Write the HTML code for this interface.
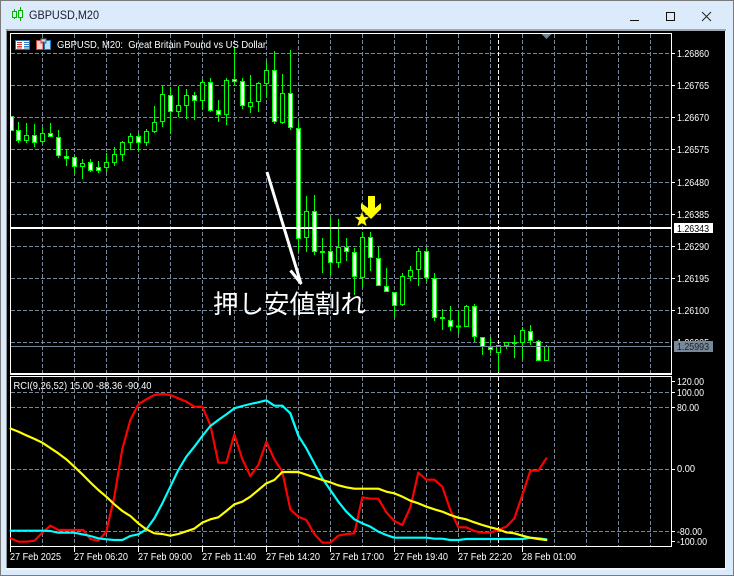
<!DOCTYPE html>
<html><head><meta charset="utf-8"><title>GBPUSD,M20</title>
<style>
html,body{margin:0;padding:0;width:734px;height:576px;overflow:hidden;background:#dcebfb}
svg{position:absolute;left:0;top:0;display:block}
text{font-family:"Liberation Sans","Noto Sans CJK JP",sans-serif;font-size:10.5px;fill:#fff}
.c{shape-rendering:crispEdges}
.w{fill:#fff;stroke:#0f0;stroke-width:1}
.h{fill:#000;stroke:#0f0;stroke-width:1}
.l{fill:none;stroke-width:6.5;stroke-linejoin:round;stroke-linecap:round}
</style></head><body>
<svg width="734" height="576" viewBox="0 0 734 576" xmlns="http://www.w3.org/2000/svg">
<defs><clipPath id="m"><rect x="11" y="34" width="660" height="340"/></clipPath></defs>
<rect width="734" height="576" fill="#dcebfb"/>
<path class="c" d="M.5 576V.5H733.5V576M0 575.5H734" fill="none" stroke="#7a7a7a"/>
<rect class="c" x="6" y="29" width="720" height="2" fill="#a3a8ae"/>
<rect class="c" x="6" y="29" width="2" height="540" fill="#8f959b"/>
<rect class="c" x="7" y="31" width="718" height="537" fill="#000"/>
<rect class="c" x="6" y="568" width="720" height="2" fill="#f2f5f8"/>
<rect class="c" x="725" y="31" width="1" height="538" fill="#f2f5f8"/>

<!-- title bar -->
<g class="c" fill="none" stroke="#00b400"><path d="M14.5 9V19M20.5 7V21"/><rect x="12.5" y="11.5" width="4" height="6" fill="#dcebfb"/><rect x="18.5" y="10.5" width="4" height="7" fill="#dcebfb"/></g>
<text x="29" y="19" textLength="70" lengthAdjust="spacingAndGlyphs" style="font-size:12px;fill:#1c1c30">GBPUSD,M20</text>
<path class="c" d="M630 20.5H639" stroke="#111"/>
<rect class="c" x="666.5" y="12.5" width="8" height="8" fill="none" stroke="#111"/>
<path d="M702 12L711 21M711 12L702 21" stroke="#222" fill="none"/>

<!-- grid -->
<path class="c" fill="none" stroke="#778899" stroke-dasharray="4 2" d="M11 53.5H671M11 85.5H671M11 117.5H671M11 149.5H671M11 182.5H671M11 214.5H671M11 246.5H671M11 278.5H671M11 310.5H671M11 342.5H671M11 392.5H671M11 407.5H671M11 469.5H671M11 531.5H671"/>
<path class="c" fill="none" stroke="#778899" stroke-dasharray="4 2" d="M42.5 34V374M74.5 34V374M106.5 34V374M138.5 34V374M170.5 34V374M202.5 34V374M234.5 34V374M266.5 34V374M298.5 34V374M330.5 34V374M362.5 34V374M394.5 34V374M426.5 34V374M458.5 34V374M490.5 34V374M522.5 34V374M554.5 34V374M586.5 34V374M618.5 34V374M650.5 34V374M42.5 377V546M74.5 377V546M106.5 377V546M138.5 377V546M170.5 377V546M202.5 377V546M234.5 377V546M266.5 377V546M298.5 377V546M330.5 377V546M362.5 377V546M394.5 377V546M426.5 377V546M458.5 377V546M490.5 377V546M522.5 377V546M554.5 377V546M586.5 377V546M618.5 377V546M650.5 377V546"/>
<path class="c" fill="none" stroke="#fff" stroke-dasharray="4 2" d="M498.5 34V374M498.5 377V546"/>

<!-- candles -->
<g class="c" clip-path="url(#m)">
<path fill="none" stroke="#0f0" d="M18.5 122V143M26.5 123V143M34.5 124V147M42.5 128V143M50.5 123V137M58.5 130V158M66.5 149V166M74.5 155V173M82.5 159V179M90.5 159V172M98.5 161V173M106.5 153V172M114.5 147V166M122.5 141V161M130.5 133V150M138.5 133V151M146.5 129V146M154.5 106V133M162.5 86V127M170.5 87V134M178.5 86V117M186.5 89V119M194.5 92V120M202.5 80V110M210.5 78V112M218.5 100V122M226.5 78V125M234.5 47V85M242.5 78V109M250.5 75V113M258.5 82V112M266.5 61V98M274.5 51V124M282.5 74V124M290.5 50V130M298.5 122V252M306.5 196V252M314.5 195V255M322.5 238V273M330.5 218V275M338.5 219V268M346.5 238V261M354.5 248V295M362.5 232V287M370.5 232V271M378.5 247V286M386.5 268V292M394.5 292V318M402.5 273V306M410.5 266V281M418.5 248V286M426.5 247V282M434.5 273V321M442.5 309V330M450.5 306V331M458.5 310V334M466.5 305V327M474.5 304V342M482.5 337V355M490.5 337V353M498.5 345V372M506.5 342V349M514.5 335V358M522.5 327V360M530.5 325V345M538.5 340V361M546.5 345V361"/>
<path class="h" d="M24.5 135.5h4v5h-4zM40.5 133.5h4v8h-4zM80.5 163.5h4v3h-4zM104.5 162.5h4v5h-4zM112.5 154.5h4v8h-4zM120.5 142.5h4v12h-4zM128.5 136.5h4v6h-4zM144.5 131.5h4v11h-4zM152.5 122.5h4v9h-4zM160.5 94.5h4v27h-4zM176.5 105.5h4v6h-4zM184.5 95.5h4v10h-4zM200.5 82.5h4v18h-4zM224.5 80.5h4v34h-4zM248.5 102.5h4v4h-4zM256.5 83.5h4v18h-4zM264.5 70.5h4v13h-4zM280.5 93.5h4v29h-4zM304.5 211.5h4v26h-4zM336.5 247.5h4v15h-4zM360.5 237.5h4v40h-4zM400.5 276.5h4v28h-4zM408.5 270.5h4v6h-4zM416.5 251.5h4v18h-4zM464.5 306.5h4v20h-4zM496.5 345.5h4v7h-4zM504.5 342.5h4v3h-4zM512.5 342.5h4v1h-4zM520.5 330.5h4v12h-4zM544.5 346.5h4v14h-4z"/>
<path class="w" d="M9.5 116.5h4v14h-4zM16.5 130.5h4v10h-4zM32.5 135.5h4v7h-4zM48.5 133.5h4v3h-4zM56.5 137.5h4v18h-4zM64.5 156.5h4v2h-4zM72.5 157.5h4v9h-4zM88.5 162.5h4v8h-4zM96.5 167.5h4v3h-4zM136.5 136.5h4v6h-4zM168.5 95.5h4v16h-4zM192.5 95.5h4v5h-4zM208.5 82.5h4v28h-4zM216.5 110.5h4v4h-4zM232.5 79.5h4v2h-4zM240.5 81.5h4v24h-4zM272.5 70.5h4v51h-4zM288.5 93.5h4v34h-4zM296.5 128.5h4v110h-4zM312.5 211.5h4v40h-4zM328.5 251.5h4v11h-4zM344.5 247.5h4v4h-4zM352.5 252.5h4v24h-4zM368.5 237.5h4v20h-4zM376.5 258.5h4v27h-4zM384.5 286.5h4v5h-4zM392.5 292.5h4v13h-4zM424.5 251.5h4v26h-4zM432.5 278.5h4v39h-4zM440.5 317.5h4v1h-4zM448.5 320.5h4v6h-4zM456.5 326h4v1h-4zM472.5 306.5h4v30h-4zM480.5 337.5h4v9h-4zM488.5 347.5h4v2h-4zM528.5 331.5h4v9h-4zM536.5 341.5h4v19h-4z"/>
<rect x="320" y="251" width="5" height="2" fill="#0f0"/>
</g>

<!-- price lines -->
<rect class="c" x="11" y="227" width="660" height="2" fill="#fff"/>
<rect class="c" x="11" y="346" width="660" height="1" fill="#778899"/>

<!-- frames -->
<path class="c" fill="none" stroke="#fff" d="M10.5 33.5H671.5V374.5H10.5ZM10.5 376.5H671.5V546.5H10.5Z"/>
<rect class="c" x="11" y="373" width="661" height="1" fill="#fff"/>
<path class="c" fill="none" stroke="#fff" d="M671 53.5h4M671 85.5h4M671 117.5h4M671 149.5h4M671 182.5h4M671 214.5h4M671 246.5h4M671 278.5h4M671 310.5h4M671 381.5h4M671 392.5h4M671 407.5h4M671 469.5h4M671 531.5h4M671 541.5h4M10.5 547v5M74.5 547v5M138.5 547v5M202.5 547v5M266.5 547v5M330.5 547v5M394.5 547v5M458.5 547v5M522.5 547v5"/>
<polygon points="541.5,34 551.5,34 546.5,39" fill="#6f8296"/>

<!-- RCI lines -->
<g transform="translate(0,370) scale(.33333)">
<polyline class="l" stroke="#f00" points="32,505 55,515 79,515 104,512 127,488 151,467 175,480 199,480 223,480 250,480 271,507 295,512 319,485 343,380 367,237 391,150 415,103 439,88 463,75 487,72 511,75 535,85 559,95 583,110 607,110 631,165 655,278 679,278 703,193 727,268 751,318 775,285 799,215 823,268 847,305 871,418 895,440"/>
<polyline class="l" stroke="#0ff" points="32,482 127,482 151,483 175,488 223,488 247,493 271,498 295,505 319,508 343,510 367,510 391,498 415,493 439,478 463,445 487,400 511,350 535,300 559,260 583,230 607,198 631,168 655,150 679,133 703,115 727,108 751,102 775,97 799,91 823,107 847,107 871,130 895,197"/>
<polyline class="l" stroke="#ff0" points="32,176 55,185 79,196 104,207 127,218 151,234 175,250 199,268 223,290 247,313 271,337 295,360 319,380 343,403 367,423 391,438 415,460 439,478 463,490 487,492 511,497 535,492 559,484 583,476 607,458 631,448 655,442 679,423 703,403 727,395 751,380 775,360 799,340 823,330 847,306 895,306"/>
</g>
<g transform="translate(290,370) scale(.33333)">
<polyline class="l" stroke="#f00" points="25,440 49,450 73,492 97,518 121,518 145,497 169,492 193,490 217,382 241,386 265,386 289,427 313,453 337,465 361,412 385,308 409,329 433,329 457,350 481,420 505,472 529,472 553,483 577,488 601,488 625,480 649,470 673,445 697,375 721,302 745,302 769,265"/>
<polyline class="l" stroke="#0ff" points="1,130 25,197 49,235 73,280 97,325 121,360 145,395 169,425 193,448 217,460 241,470 265,485 289,495 313,503 409,503 433,506 457,506 481,510 505,510 529,507 697,507 721,503 745,505 769,508"/>
<polyline class="l" stroke="#ff0" points="0,306 25,306 49,314 73,322 97,330 121,337 145,346 169,352 193,356 265,356 289,365 313,370 337,380 361,392 385,400 409,410 433,418 457,425 481,435 505,443 529,448 553,457 577,465 601,472 625,478 649,487 673,490 697,497 721,503 745,507 769,510"/>
</g>

<!-- annotations -->
<path d="M267 172L300.5 282M290.5 270.5L301.5 284" fill="none" stroke="#fff" stroke-width="3"/>
<polygon points="368,196 375,196 375,208 381,203 381,209 371,219 361,209 361,203 368,208" fill="#ff0"/>
<polygon points="362,212 364,217 369,217 365,220.5 366.5,226 362,223 357.500,226 359,220.500 355,217 360,217" fill="#ff0" stroke="#a08a00" stroke-width=".4"/>
<text x="213" y="313" style="font-size:25.5px">押し安値割れ</text>

<!-- chart header -->
<rect class="c" x="15.500" y="40.500" width="14" height="9" fill="#fff" stroke="#2f6ea5"/>
<path class="c" d="M17 42.500H22M17 44.500H22M17 46.500H22M17 48H22" stroke="#d8402f"/>
<path class="c" d="M24 42.500H29M24 44.500H29M24 46.500H29M24 48H29" stroke="#2f7fc4"/>
<path class="c" d="M36.500 40.500H41V43H43V49.500H36.500Z" fill="#fbd6cc" stroke="#d63b2f"/>
<path class="c" d="M44.500 49.500V43H46V40.500H50.500V49.500Z" fill="#bfe0f5" stroke="#1f78bd"/>
<rect class="c" x="41" y="39" width="5" height="3" fill="#d8d8d8" stroke="#777" stroke-width=".8"/>
<text x="57" y="48" textLength="209" lengthAdjust="spacingAndGlyphs">GBPUSD, M20:&#160;&#160;Great Britain Pound vs US Dollar</text>
<text x="13.500" y="389" textLength="138" lengthAdjust="spacingAndGlyphs">RCI(9,26,52) 15.00 -88.36 -90.40</text>

<!-- price labels -->
<g>
<text x="677" y="57" textLength="32" lengthAdjust="spacingAndGlyphs">1.26860</text>
<text x="677" y="89" textLength="32" lengthAdjust="spacingAndGlyphs">1.26765</text>
<text x="677" y="121" textLength="32" lengthAdjust="spacingAndGlyphs">1.26670</text>
<text x="677" y="153" textLength="32" lengthAdjust="spacingAndGlyphs">1.26575</text>
<text x="677" y="186" textLength="32" lengthAdjust="spacingAndGlyphs">1.26480</text>
<text x="677" y="218" textLength="32" lengthAdjust="spacingAndGlyphs">1.26385</text>
<text x="677" y="250" textLength="32" lengthAdjust="spacingAndGlyphs">1.26290</text>
<text x="677" y="282" textLength="32" lengthAdjust="spacingAndGlyphs">1.26195</text>
<text x="677" y="314" textLength="32" lengthAdjust="spacingAndGlyphs">1.26100</text>
<text x="677" y="346" textLength="32" lengthAdjust="spacingAndGlyphs">1.26005</text>
</g>
<rect class="c" x="674" y="223" width="39" height="10" fill="#fff"/>
<text x="677" y="232" textLength="32" lengthAdjust="spacingAndGlyphs" style="fill:#000">1.26343</text>
<rect class="c" x="674" y="341" width="39" height="11" fill="#778899"/>
<text x="677" y="350" textLength="32" lengthAdjust="spacingAndGlyphs" style="fill:#1a2028">1.25993</text>

<text x="677" y="385" textLength="27" lengthAdjust="spacingAndGlyphs">120.00</text>
<text x="677" y="396" textLength="27" lengthAdjust="spacingAndGlyphs">100.00</text>
<text x="677" y="411" textLength="22" lengthAdjust="spacingAndGlyphs">80.00</text>
<text x="677" y="472" textLength="18" lengthAdjust="spacingAndGlyphs">0.00</text>
<text x="677" y="535" textLength="25" lengthAdjust="spacingAndGlyphs">-80.00</text>
<text x="677" y="545" textLength="30" lengthAdjust="spacingAndGlyphs">-100.00</text>

<!-- time labels -->
<text x="10" y="560" textLength="51" lengthAdjust="spacingAndGlyphs">27 Feb 2025</text>
<text x="74" y="560" textLength="54" lengthAdjust="spacingAndGlyphs">27 Feb 06:20</text>
<text x="138" y="560" textLength="54" lengthAdjust="spacingAndGlyphs">27 Feb 09:00</text>
<text x="202" y="560" textLength="54" lengthAdjust="spacingAndGlyphs">27 Feb 11:40</text>
<text x="266" y="560" textLength="54" lengthAdjust="spacingAndGlyphs">27 Feb 14:20</text>
<text x="330" y="560" textLength="54" lengthAdjust="spacingAndGlyphs">27 Feb 17:00</text>
<text x="394" y="560" textLength="54" lengthAdjust="spacingAndGlyphs">27 Feb 19:40</text>
<text x="458" y="560" textLength="54" lengthAdjust="spacingAndGlyphs">27 Feb 22:20</text>
<text x="522" y="560" textLength="54" lengthAdjust="spacingAndGlyphs">28 Feb 01:00</text>
</svg>
</body></html>
